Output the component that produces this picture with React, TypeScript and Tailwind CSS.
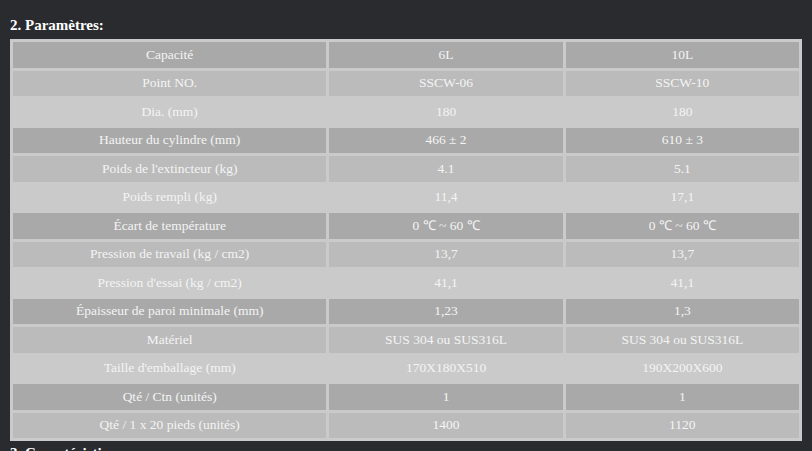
import React from 'react';

const rows: [string, string, string][] = [
    ['Capacité', '6L', '10L'],
    ['Point NO.', 'SSCW-06', 'SSCW-10'],
    ['Dia. (mm)', '180', '180'],
    ['Hauteur du cylindre (mm)', '466 ± 2', '610 ± 3'],
    ["Poids de l'extincteur (kg)", '4.1', '5.1'],
    ['Poids rempli (kg)', '11,4', '17,1'],
    ['Écart de température', '0 ℃ ~ 60 ℃', '0 ℃ ~ 60 ℃'],
    ['Pression de travail (kg / cm2)', '13,7', '13,7'],
    ["Pression d'essai (kg / cm2)", '41,1', '41,1'],
    ['Épaisseur de paroi minimale (mm)', '1,23', '1,3'],
    ['Matériel', 'SUS 304 ou SUS316L', 'SUS 304 ou SUS316L'],
    ["Taille d'emballage (mm)", '170X180X510', '190X200X600'],
    ['Qté / Ctn (unités)', '1', '1'],
    ['Qté / 1 x 20 pieds (unités)', '1400', '1120'],
];

// dark, medium, light (light = no cell background)
const rowBg = ['bg-[#a9a9a9]', 'bg-[#bbbbbb]', 'bg-transparent'];

const App: React.FC = () => {
    return (
        <div className="min-h-[451px] w-[812px] overflow-hidden bg-[#2a2b2f] px-[10px] pt-[16px] font-['Liberation_Serif',serif]">
            <h3 className="mb-[5px] text-[15px] font-bold leading-[18px] text-white">2. Paramètres:</h3>
            <table className="w-[792px] table-fixed border-separate border-spacing-[3px] bg-[#cacaca] text-[13.5px] text-[#f4f4f4]">
                <colgroup>
                    <col className="w-[313px]" />
                    <col className="w-[233px]" />
                    <col className="w-[233px]" />
                </colgroup>
                <tbody>
                    {rows.map((row, i) => (
                        <tr key={i} className={rowBg[i % 3]}>
                            {row.map((cell, j) => (
                                <td key={j} className="h-[25.5px] p-0 text-center align-middle leading-[16px]">
                                    {cell}
                                </td>
                            ))}
                        </tr>
                    ))}
                </tbody>
            </table>
            <h3 className="mt-[3px] text-[15px] font-bold leading-[18px] text-white">3. Caractéristiques:</h3>
        </div>
    );
};

export default App;
